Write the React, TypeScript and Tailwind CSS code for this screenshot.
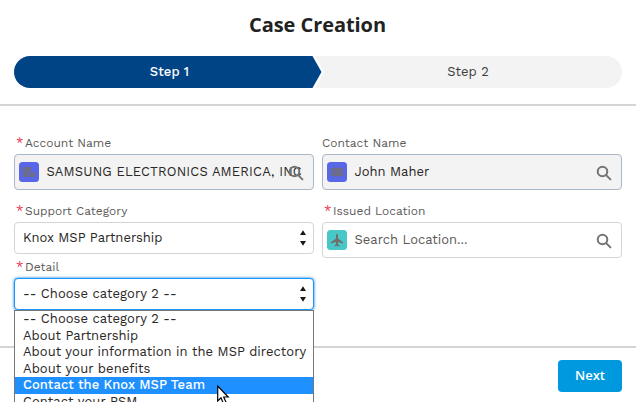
import type { ReactNode } from "react";

function Label({ children, required = false }: { children: ReactNode; required?: boolean }) {
  return (
    <div className="flex h-[22px] items-center text-[12px] leading-[22px] text-[#5c5a59] whitespace-nowrap">
      {required && <span className="ml-[2px] w-[9px] shrink-0 text-[13px] text-[#ea3050]">*</span>}
      <span>{children}</span>
    </div>
  );
}

function SearchIcon() {
  return (
    <svg className="absolute right-[9px] top-[10px] h-4 w-4" viewBox="0 0 16 16" fill="none" stroke="#747474" strokeWidth="2">
      <circle cx="6.5" cy="6.5" r="4.8" />
      <path d="M10.1 10.1 14.4 14.4" strokeLinecap="round" />
    </svg>
  );
}

function Lookup({ icon, children, tone, textClass }: { icon: ReactNode; children: ReactNode; tone: string; textClass: string }) {
  return (
    <div className={`relative flex h-9 items-center rounded border pl-1 ${tone}`}>
      {icon}
      <span className={`ml-[7.5px] whitespace-nowrap text-[13px] ${textClass}`}>{children}</span>
      <SearchIcon />
    </div>
  );
}

function Select({ children, tone, textClass }: { children: ReactNode; tone: string; textClass: string }) {
  return (
    <div className={`flex h-8 items-center justify-between rounded border bg-white pl-2 pr-[7px] text-[#2b2826] ${tone}`}>
      <span className={`whitespace-nowrap text-[13px] ${textClass}`}>{children}</span>
      <svg className="h-4 w-[6px]" viewBox="0 0 6 16" fill="#181818">
        <path d="M3 .3 6 5H0ZM0 11H6L3 15.7Z" />
      </svg>
    </div>
  );
}

function AccountIcon() {
  return (
    <svg className="h-5 w-5 shrink-0" viewBox="0 0 20 20">
      <rect width="20" height="20" rx="3.5" fill="#5867e8" />
      <path fill="#706e7c" d="M4 5h8v4h-2v6H4ZM11 10h5v5h-5Z" />
      <path stroke="#5867e8" strokeWidth=".6" d="M6 7h1.2M8.5 7h1.2M6 9.5h1.2M6 12h1.2M8.3 9.5h1.2M8.3 12h1.2M12 12h1M14 12h1M10.4 10v5" />
    </svg>
  );
}

function ContactIcon() {
  return (
    <svg className="h-5 w-5 shrink-0" viewBox="0 0 20 20">
      <rect width="20" height="20" rx="3.5" fill="#5867e8" />
      <rect x="4" y="5.7" width="12" height="8.6" rx="1" fill="#706e7c" />
      <circle cx="7.5" cy="8.6" r="1.2" fill="#5b66d4" />
      <path d="M5.3 12.3q2.2-3 4.4 0" fill="#5b66d4" />
      <path d="M11 8.5h3.6M11.6 10.7h2.5" stroke="#5b66d4" strokeWidth="1" />
    </svg>
  );
}

function LocationIcon() {
  return (
    <svg className="h-5 w-5 shrink-0" viewBox="0 0 20 20">
      <rect width="20" height="20" rx="3.5" fill="#48c7c8" />
      <path fill="#706e6b" d="M10 3.8q1 0 1 1.5v3.2l5 3.7v1.4l-5-1.7v2.5l1.5 1v1L10 15.9l-2.5.5v-1l1.5-1v-2.5l-5 1.7v-1.4l5-3.7V5.3q0-1.5 1-1.5Z" />
    </svg>
  );
}

const options = [
  { text: "-- Choose category 2 --", style: "tracking-[0.05px]" },
  { text: "About Partnership", style: "tracking-[0px]" },
  { text: "About your information in the MSP directory", style: "tracking-[0.04px]" },
  { text: "About your benefits", style: "tracking-[0.07px]" },
  { text: "Contact the Knox MSP Team", style: "tracking-[0.06px] font-medium", active: true },
  { text: "Contact your PSM", style: "tracking-[0.05px]" },
];

export default function App() {
  return (
    <div className="relative h-[402px] w-[636px] overflow-hidden bg-white font-['Work_Sans',Inter,sans-serif] text-[#2b2826]">
      <header className="h-[106px] border-b-2 border-[#d4d4d4] px-[14px]">
        <h1 className="flex h-14 items-center justify-center pb-[6px] font-['Open_Sans',sans-serif] text-[20px] font-bold text-[#222]">
          <span className="pr-px tracking-[-0.06px]">Case Creation</span>
        </h1>
        <div className="relative grid h-8 grid-cols-2 overflow-hidden rounded-full bg-[#f3f3f3] text-[13px]">
          <svg className="absolute left-0 top-0 h-8 w-[310px]" viewBox="0 0 310 32">
            <path d="M0 0H301L310 16 301 32H0Z" fill="#fff" />
            <path d="M0 0H298.5L307.5 16 298.5 32H0Z" fill="#014486" />
          </svg>
          <span className="relative flex items-center justify-center pl-[7px] font-medium tracking-[0.1px] text-white">Step 1</span>
          <span className="relative flex items-center justify-center pr-1 tracking-[0.05px] text-[#3e3e3c]">Step 2</span>
        </div>
      </header>

      <main className="grid h-[240px] grid-cols-2 content-start gap-x-2 px-[14px] pt-[26px]">
        <div className="h-[68px]">
          <Label required>Account Name</Label>
          <Lookup icon={<AccountIcon />} tone="border-[#a8b7c9] bg-[#f3f3f3]" textClass="tracking-[0.14px]">SAMSUNG ELECTRONICS AMERICA, INC</Lookup>
        </div>
        <div className="h-[68px]">
          <Label>Contact Name</Label>
          <Lookup icon={<ContactIcon />} tone="border-[#a8b7c9] bg-[#f3f3f3]" textClass="tracking-[0px]">John Maher</Lookup>
        </div>
        <div>
          <Label required>Support Category</Label>
          <Select tone="border-[#d4d4d4]" textClass="tracking-[0px]">Knox MSP Partnership</Select>
          <div className="pt-[2px]">
            <Label required>Detail</Label>
            <Select tone="border-[#1b96ff] shadow-[0_0_3px_#0176d3]" textClass="tracking-[0.05px]">-- Choose category 2 --</Select>
          </div>
        </div>
        <div>
          <Label required>Issued Location</Label>
          <Lookup icon={<LocationIcon />} tone="border-[#d4d4d4] bg-white" textClass="tracking-[0px] text-[#5c5a59]">Search Location...</Lookup>
        </div>
      </main>

      <footer className="flex h-14 justify-end border-t-2 border-[#d4d4d4] px-[14px] pt-3">
        <button className="h-8 w-16 rounded bg-[#0099e0] font-['Open_Sans',sans-serif] text-[13px] font-semibold text-white">Next</button>
      </footer>

      <ul className="absolute left-[14px] top-[310px] h-[110px] w-[300px] border border-[#767676] bg-white">
        {options.map((option) => (
          <li key={option.text} className={`flex h-[16.5px] items-center whitespace-nowrap pl-2 text-[13px] leading-[16px] ${option.active ? "bg-[#1e90ff] text-white" : ""}`}>
            <span className={option.style}>{option.text}</span>
          </li>
        ))}
      </ul>

      <svg className="absolute left-[217px] top-[385px] h-[20px] w-[13px]" viewBox="0 0 13 20">
        <path d="M.7 1V16L4 12.8 6.3 18.4 9 17.2 6.7 12H11.2Z" fill="white" stroke="black" strokeWidth="1.2" />
      </svg>
    </div>
  );
}
